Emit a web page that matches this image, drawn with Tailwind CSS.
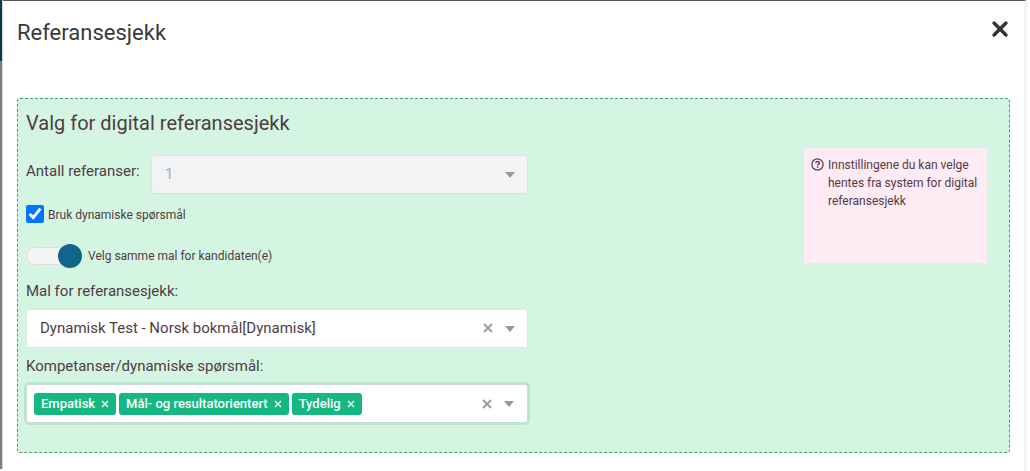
<!DOCTYPE html>
<html lang="no">
<head>
  <meta charset="UTF-8" />
  <meta name="viewport" content="width=device-width, initial-scale=1.0"/>
  <title>Referansesjekk</title>
  <script src="https://cdn.jsdelivr.net/npm/@tailwindcss/browser@4"></script>
</head>
<body class="bg-white font-[Roboto,sans-serif] text-[#503c46]">
  <div class="flex min-h-screen pr-[3px]">
    <!-- Page behind the dialog -->
    <div class="w-[3px] shrink-0 flex flex-col mb-[2px] border-r border-gray-300 bg-[#7d7d7d]">
      <div class="h-[61px] bg-[#0b3a53]"></div>
    </div>

    <!-- Dialog -->
    <div class="flex-1 border-t border-[#58585a] border-r-[3px] border-r-[#f4f4f4] pl-[14px] pr-[14px] pb-4">
      <header class="flex items-start justify-between h-[97px] pt-4">
        <h1 class="text-[22px] leading-8 text-[#3a3a3a]">Referansesjekk</h1>
        <button type="button" aria-label="Lukk" class="mt-[2px] p-px text-[#333]">
          <svg class="size-[18px]" viewBox="0 0 18 18" fill="none" stroke="currentColor" stroke-width="3.4" stroke-linecap="round"><path d="M3 3l12 12M15 3L3 15"/></svg>
        </button>
      </header>

      <section class="flex items-start justify-between border border-dashed border-[#4f9a78] rounded-[3px] bg-[#d4f5e1] pl-2 pr-[22px] pt-2 pb-[29px]">
        <form class="w-[502px]">
          <h2 class="text-[20px] leading-8">Valg for digital referansesjekk</h2>

          <div class="flex items-start mt-4">
            <label for="count" class="w-[125px] pt-[6px] text-[15px] leading-5">Antall referanser:</label>
            <div class="relative flex-1">
              <select id="count" disabled class="block w-full h-[39px] appearance-none rounded-[3px] border border-[#dfe3e6] bg-[#f2f3f5] px-[13px] text-[15px] text-[#a5a8b0] opacity-100">
                <option>1</option>
              </select>
              <svg class="absolute right-[13px] top-[17px] w-[10px] h-[6px] text-[#999]" viewBox="0 0 10 6" fill="currentColor"><path d="M0 0h10L5 6z"/></svg>
            </div>
          </div>

          <div class="flex items-center gap-1 mt-[10px]">
            <input type="checkbox" id="dynamic" checked class="size-[18px] accent-[#0075ff]" />
            <label for="dynamic" class="pt-[3px] text-[12px] leading-4">Bruk dynamiske spørsmål</label>
          </div>

          <div class="flex items-center gap-[6px] mt-6">
            <input type="checkbox" role="switch" id="same" checked class="appearance-none relative w-[56px] h-[18px] rounded-full border border-[#dedede] bg-[#f4f4f4] before:absolute before:-right-px before:-top-[4px] before:size-[24px] before:rounded-full before:bg-[#0f668a]" />
            <label for="same" class="text-[12px] leading-4">Velg samme mal for kandidaten(e)</label>
          </div>

          <label for="template" class="block mt-4 text-[15px] leading-5">Mal for referansesjekk:</label>
          <div class="relative mt-2">
            <select id="template" class="block w-full h-[39px] appearance-none rounded-[3px] border border-[#dde5e2] bg-white px-[13px] text-[15px]">
              <option>Dynamisk Test - Norsk bokmål[Dynamisk]</option>
            </select>
            <button type="button" aria-label="Fjern valg" class="absolute right-[35px] top-[14px] text-[#999]">
              <svg class="size-[10px]" viewBox="0 0 10 10" fill="none" stroke="currentColor" stroke-width="1.8"><path d="M1 1l8 8M9 1L1 9"/></svg>
            </button>
            <svg class="absolute right-[13px] top-[17px] w-[10px] h-[6px] text-[#999]" viewBox="0 0 10 6" fill="currentColor"><path d="M0 0h10L5 6z"/></svg>
          </div>

          <label for="skills" class="block mt-2 text-[15px] leading-5">Kompetanser/dynamiske spørsmål:</label>
          <div class="flex items-center gap-[3px] mt-2 h-[39px] rounded-[3px] border border-[#cfdcd6] bg-white pl-[7px] pr-[13px] ring-2 ring-[#b7e8cf]">
            <span class="flex items-center gap-[6px] h-[22px] rounded-[3px] bg-[#15b881] px-[7px] text-[13px] font-medium text-white">Empatisk
              <button type="button" aria-label="Fjern Empatisk"><svg class="size-[8px]" viewBox="0 0 8 8" fill="none" stroke="currentColor" stroke-width="1.2"><path d="M1 1l6 6M7 1L1 7"/></svg></button>
            </span>
            <span class="flex items-center gap-[6px] h-[22px] rounded-[3px] bg-[#15b881] px-[7px] text-[13px] font-medium text-white">Mål- og resultatorientert
              <button type="button" aria-label="Fjern Mål- og resultatorientert"><svg class="size-[8px]" viewBox="0 0 8 8" fill="none" stroke="currentColor" stroke-width="1.2"><path d="M1 1l6 6M7 1L1 7"/></svg></button>
            </span>
            <span class="flex items-center gap-[6px] h-[22px] rounded-[3px] bg-[#15b881] px-[7px] text-[13px] font-medium text-white">Tydelig
              <button type="button" aria-label="Fjern Tydelig"><svg class="size-[8px]" viewBox="0 0 8 8" fill="none" stroke="currentColor" stroke-width="1.2"><path d="M1 1l6 6M7 1L1 7"/></svg></button>
            </span>
            <input type="text" id="skills" class="flex-1 min-w-0 outline-none text-[15px]" />
            <button type="button" aria-label="Fjern alle" class="mr-[9px] text-[#999]">
              <svg class="size-[10px]" viewBox="0 0 10 10" fill="none" stroke="currentColor" stroke-width="1.8"><path d="M1 1l8 8M9 1L1 9"/></svg>
            </button>
            <svg class="w-[10px] h-[6px] text-[#999]" viewBox="0 0 10 6" fill="currentColor"><path d="M0 0h10L5 6z"/></svg>
          </div>
        </form>

        <aside class="flex items-start gap-[4px] w-[183px] h-[115px] mt-[41px] bg-[#ffebf4] pt-[8px] pl-[7px] pr-[7px]">
          <svg class="mt-[2px] size-[13px] shrink-0" viewBox="0 0 13 13" fill="none" stroke="currentColor" stroke-width="1.2"><circle cx="6.5" cy="6.5" r="5.6"/><path d="M4.7 5.2c0-2.3 3.7-2.3 3.7-.1 0 1.3-1.8 1.2-1.8 2.5" stroke-width="1.4"/><path d="M6.6 8.4v1.4" stroke-width="1.5"/></svg>
          <p class="text-[12px] leading-[18px]">Innstillingene du kan velge hentes fra system for digital referansesjekk</p>
        </aside>
      </section>
    </div>
  </div>
</body>
</html>
